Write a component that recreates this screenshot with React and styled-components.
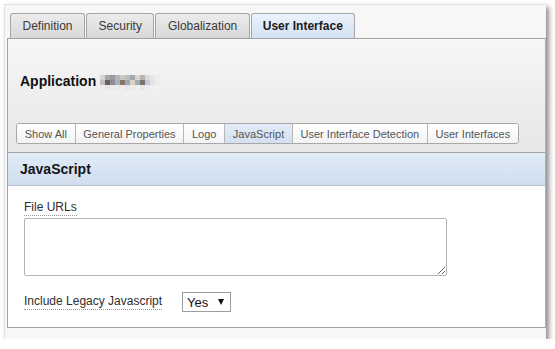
import React from "react";
import styled, { createGlobalStyle } from "styled-components";

const GlobalStyle = createGlobalStyle`
  body {
    margin: 0;
    background: #ffffff;
    font-family: "Liberation Sans", Arial, sans-serif;
  }
`;

const Frame = styled('div')`
  box-sizing: border-box;
  margin: 4px 0 0 4px;
  width: 542px;
  height: 335px;
  padding-top: 8px;
  background: #f7f7f7;
  border-top: 1px solid #e2e2e2;
  border-left: 1px solid #e2e2e2;
  box-shadow: 3px 3px 5px rgba(0, 0, 0, 0.45);
  display: flex;
  flex-direction: column;
`;

const TabRow = styled('div')`
  display: flex;
  gap: 1px;
  padding-left: 5px;
  height: 25px;
`;

const Tab = styled('div')`
  box-sizing: border-box;
  height: 25px;
  padding: 0 ${props => props.active ? '11px' : '11.5px'};
  border: 1px solid #a6a6a6;
  border-bottom: none;
  border-radius: 3px 3px 0 0;
  display: flex;
  align-items: center;
  font-size: 12px;
  color: ${props => props.active ? '#1a1a1a' : '#3a3a3a'};
  font-weight: ${props => props.active ? 'bold' : 'normal'};
  background: ${props => props.active
    ? 'linear-gradient(#eaf2fc, #d4e2f3)'
    : 'linear-gradient(#ececec, #d8d8d8)'};
`;

const Panel = styled('div')`
  box-sizing: border-box;
  margin-left: 2px;
  height: 290px;
  border: 1px solid #a2a2a2;
  border-right: 1px solid #b0b0b0;
  background: #ffffff;
  display: flex;
  flex-direction: column;
`;

const HeaderArea = styled('div')`
  background: linear-gradient(#f6f6f6, #e7e7e7);
  padding-bottom: 8px;
`;

const TitleRow = styled('div')`
  height: 84px;
  padding-left: 12px;
  display: flex;
  align-items: center;
  gap: 4px;
`;

const Title = styled('span')`
  font-size: 14px;
  font-weight: bold;
  color: #111;
`;

const Mosaic = styled('div')`
  display: grid;
  grid-template-columns: repeat(12, 5px);
  grid-auto-rows: 5px;
  margin-top: 2px;
`;

const Cell = styled('div')`
  background: ${props => props.color};
`;

const SubTabWrap = styled('div')`
  display: flex;
`;

const SubTabs = styled('div')`
  margin-left: 8px;
  display: inline-flex;
  height: 21px;
  box-sizing: border-box;
  border: 1px solid #a8a8a8;
  border-radius: 3px;
  overflow: hidden;
`;

const SubTab = styled('div')`
  padding: 0 7.7px;
  display: flex;
  align-items: center;
  font-size: 11px;
  color: #555;
  background: ${props => props.active
    ? 'linear-gradient(#e2ebf7, #d3e0f1)'
    : 'linear-gradient(#ffffff, #f3f3f3)'};
  &:not(:last-child) {
    border-right: 1px solid #b8b8b8;
  }
`;

const SectionBand = styled('div')`
  box-sizing: border-box;
  height: 34px;
  border-top: 1px solid #a4a4a4;
  border-bottom: 1px solid #b6c2cf;
  background: linear-gradient(#e2ecf9, #cfddee);
  padding-left: 12px;
  display: flex;
  align-items: center;
  font-size: 14px;
  font-weight: bold;
  color: #151515;
`;

const Body = styled('div')`
  padding: 14px 16px 0 16px;
  display: flex;
  flex-direction: column;
  align-items: flex-start;
`;

const FieldLabel = styled('span')`
  display: inline-block;
  font-size: 12px;
  line-height: 15px;
  color: #2e2e2e;
  border-bottom: 1px dotted #9a9a9a;
`;

const TextArea = styled('textarea')`
  box-sizing: border-box;
  display: block;
  margin-top: 2px;
  width: 423px;
  height: 58px;
  border: 1px solid #b4b4b4;
  border-radius: 2px;
  background: #fff;
  font-family: "Liberation Sans", Arial, sans-serif;
  font-size: 12px;
  outline: none;
`;

const FieldRow = styled('div')`
  margin-top: 16px;
  display: flex;
  align-items: center;
`;

const LabelCell = styled('div')`
  width: 158px;
  display: flex;
`;

const SelectWrap = styled('div')`
  position: relative;
  width: 49px;
  height: 20px;
`;

const Select = styled('select')`
  box-sizing: border-box;
  appearance: none;
  width: 100%;
  height: 100%;
  border: 1px solid #9c9c9c;
  border-radius: 0;
  background: #fff;
  padding: 0 0 0 4px;
  font-family: "Liberation Sans", Arial, sans-serif;
  font-size: 13px;
  color: #111;
  outline: none;
`;

const Arrow = styled('span')`
  position: absolute;
  right: 7px;
  top: 7px;
  width: 0;
  height: 0;
  border-left: 3px solid transparent;
  border-right: 3px solid transparent;
  border-top: 6px solid #111;
  pointer-events: none;
`;

const mosaicColors = [
  '#d6d6d6', '#a9a6a4', '#9a9a9e', '#b3b6ba', '#cfc8bd', '#b8bec4', '#a3a8ae', '#ddd6cc', '#b4b4b6', '#d4dbe3', '#e6e6e6', '#ededed',
  '#c3bebb', '#6a6060', '#8d8c94', '#a8b0b8', '#8c7464', '#9aa8b0', '#dbd3c4', '#a2aab2', '#7c7272', '#bccbd9', '#e2e2e2', '#ececec',
  '#ececec', '#e6e6e6', '#ebebeb', '#e9e9e9', '#eeeeee', '#e8e8e8', '#ececec', '#efefef', '#e7e7e7', '#ededed', '#f0f0f0', '#f0f0f0',
];

const mainTabs = ['Definition', 'Security', 'Globalization', 'User Interface'];
const subTabs = ['Show All', 'General Properties', 'Logo', 'JavaScript', 'User Interface Detection', 'User Interfaces'];

export default function App() {
  return (
    <>
      <GlobalStyle />
      <Frame>
        <TabRow>
          {mainTabs.map(t => (
            <Tab key={t} active={t === 'User Interface'}>{t}</Tab>
          ))}
        </TabRow>
        <Panel>
          <HeaderArea>
            <TitleRow>
              <Title>Application</Title>
              <Mosaic>
                {mosaicColors.map((c, i) => <Cell key={i} color={c} />)}
              </Mosaic>
            </TitleRow>
            <SubTabWrap>
              <SubTabs>
                {subTabs.map(t => (
                  <SubTab key={t} active={t === 'JavaScript'}>{t}</SubTab>
                ))}
              </SubTabs>
            </SubTabWrap>
          </HeaderArea>
          <SectionBand>JavaScript</SectionBand>
          <Body>
            <FieldLabel>File URLs</FieldLabel>
            <TextArea />
            <FieldRow>
              <LabelCell>
                <FieldLabel>Include Legacy Javascript</FieldLabel>
              </LabelCell>
              <SelectWrap>
                <Select defaultValue="Yes">
                  <option>Yes</option>
                  <option>No</option>
                </Select>
                <Arrow />
              </SelectWrap>
            </FieldRow>
          </Body>
        </Panel>
      </Frame>
    </>
  );
}
